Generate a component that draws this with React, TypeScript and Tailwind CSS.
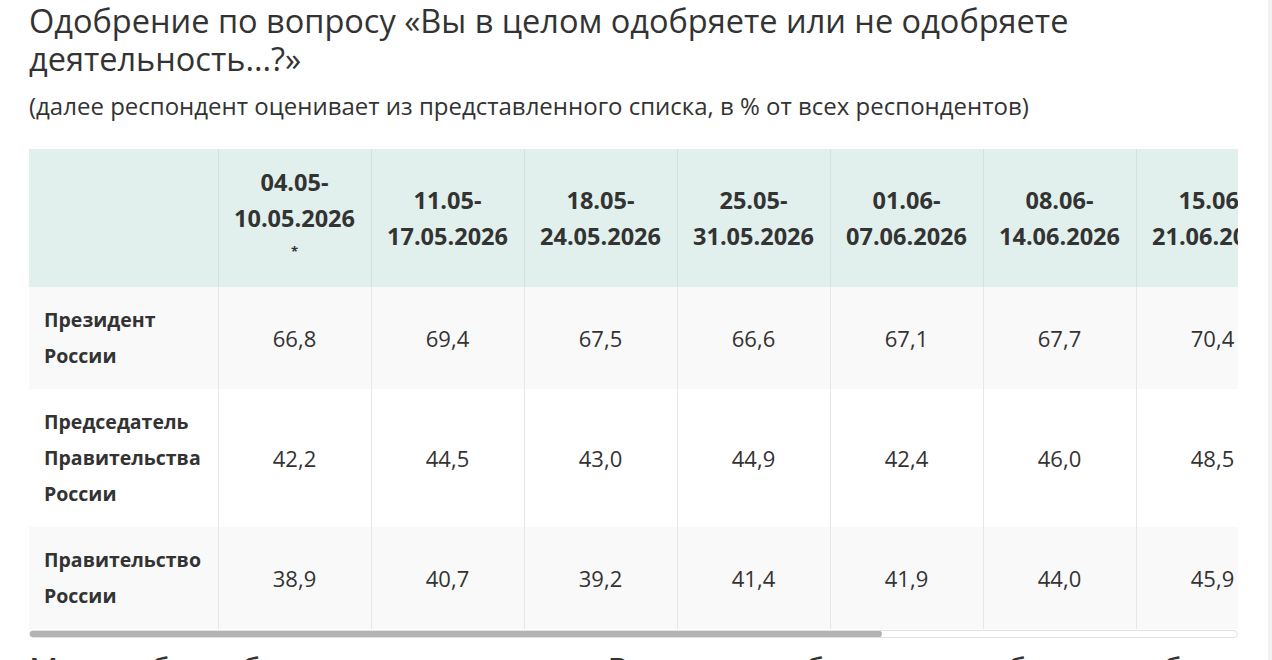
import React from 'react';

const periods = [
  ['04.05-', '10.05.2026', '*'],
  ['11.05-', '17.05.2026'],
  ['18.05-', '24.05.2026'],
  ['25.05-', '31.05.2026'],
  ['01.06-', '07.06.2026'],
  ['08.06-', '14.06.2026'],
  ['15.06-', '21.06.2026'],
  ['22.06-', '28.06.2026'],
  ['29.06-', '05.07.2026'],
  ['06.07-', '12.07.2026'],
];

const rows = [
  { label: ['Президент', 'России'], values: ['66,8', '69,4', '67,5', '66,6', '67,1', '67,7', '70,4', '69,8', '68,9', '69,2'] },
  { label: ['Председатель', 'Правительства', 'России'], values: ['42,2', '44,5', '43,0', '44,9', '42,4', '46,0', '48,5', '47,1', '46,3', '46,8'] },
  { label: ['Правительство', 'России'], values: ['38,9', '40,7', '39,2', '41,4', '41,9', '44,0', '45,9', '44,6', '43,8', '44,1'] },
];

export default function App() {
  return (
    <div className="flex h-[660px] overflow-hidden bg-white text-[#333]" style={{ fontFamily: '"Open Sans", "Noto Sans", sans-serif' }}>
      <main className="flex-1 min-w-0 pl-[29px] pr-[30px]">
        <h1 className="text-[32.5px] leading-[38px] font-normal pt-[2px]">
          Одобрение по вопросу «Вы в целом одобряете или не одобряете деятельность...?»
        </h1>
        <p className="mt-[13px] text-[24px] leading-[30px]">
          (далее респондент оценивает из представленного списка, в % от всех респондентов)
        </p>

        <div className="mt-[28px] w-[1209px] overflow-hidden">
          <table className="table-fixed border-collapse w-[1719px]">
            <colgroup>
              <col className="w-[189px]" />
              {periods.map((_, i) => <col key={i} className="w-[153px]" />)}
            </colgroup>
            <thead>
              <tr className="bg-[#e1f0ec]">
                <th className="h-[138px]" />
                {periods.map((p, i) => (
                  <th key={i} className="border-l border-[#d3e2de] px-1 text-center text-[23.5px] leading-[36px] font-bold text-[#333] whitespace-nowrap">
                    {p[0]}<br />{p[1]}
                    {p[2] && <><br /><span className="text-[13px] leading-[30px] align-top">{p[2]}</span></>}
                  </th>
                ))}
              </tr>
            </thead>
            <tbody>
              {rows.map((r, ri) => (
                <tr key={ri} className={ri % 2 === 0 ? 'bg-[#f9f9f9]' : 'bg-white'}>
                  <td className="py-[15px] pl-[15px] pr-2 text-[19.5px] leading-[36px] font-bold">
                    {r.label.map((l, li) => <div key={li}>{l}</div>)}
                  </td>
                  {r.values.map((v, vi) => (
                    <td key={vi} className="border-l border-[#e6e6e6] text-center text-[22px] leading-[36px]">{v}</td>
                  ))}
                </tr>
              ))}
            </tbody>
          </table>
        </div>

        {/* horizontal scrollbar */}
        <div className="mt-px w-[1209px] h-[8px] rounded-full border border-[#e2e2e2] bg-white overflow-hidden">
          <div className="w-[851px] h-full -mt-px -ml-px box-content border border-[#b3b3b3] rounded-full bg-[#b3b3b3]" />
        </div>

        <h2 className="mt-[13px] text-[32.5px] leading-[38px] font-normal whitespace-nowrap">
          Можно было бы предположить, что Вы и наше общество одобряете работу в целом одобрительно
        </h2>
      </main>
      <aside className="w-[4px] shrink-0 bg-[#f1f1f1]" />
    </div>
  );
}
